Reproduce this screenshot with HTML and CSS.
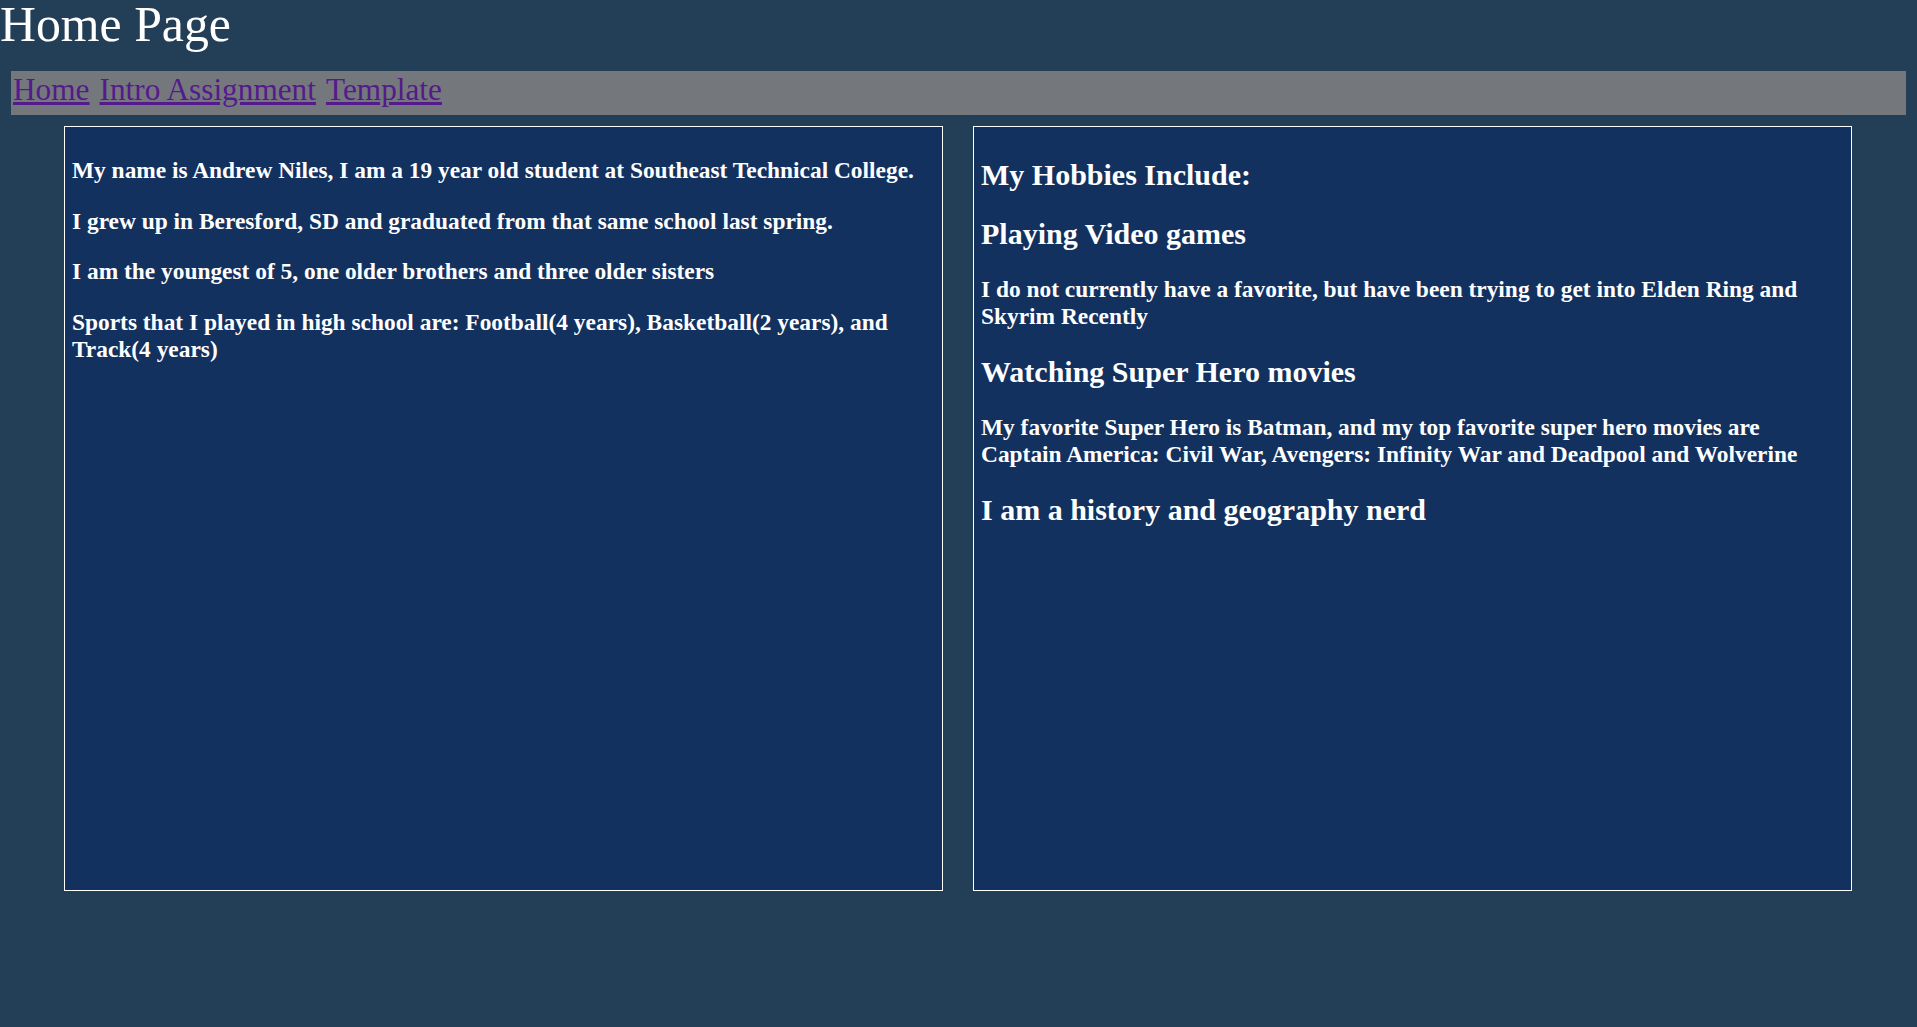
FILE: index.html
```html
<!DOCTYPE html>
<html lang="en">
<head>
<meta charset="utf-8">
<title>Home Page</title>
<link rel="stylesheet" href="styles.css">
</head>
<body>
<h1 class="title">Home Page</h1>
<nav class="nav">
  <a class="nav-link" href="#home">Home</a>
  <a class="nav-link" href="#intro">Intro Assignment</a>
  <a class="nav-link" href="#template">Template</a>
</nav>
<main class="columns">
  <section class="box box-left">
    <h3 class="text">My name is Andrew Niles, I am a 19 year old student at Southeast Technical College.</h3>
    <h3 class="text">I grew up in Beresford, SD and graduated from that same school last spring.</h3>
    <h3 class="text">I am the youngest of 5, one older brothers and three older sisters</h3>
    <h3 class="text">Sports that I played in high school are: Football(4 years), Basketball(2 years), and Track(4 years)</h3>
  </section>
  <section class="box box-right">
    <h2 class="heading">My Hobbies Include:</h2>
    <h2 class="heading">Playing Video games</h2>
    <h3 class="text">I do not currently have a favorite, but have been trying to get into Elden Ring and Skyrim Recently</h3>
    <h2 class="heading">Watching Super Hero movies</h2>
    <h3 class="text">My favorite Super Hero is Batman, and my top favorite super hero movies are Captain America: Civil War, Avengers: Infinity War and Deadpool and Wolverine</h3>
    <h2 class="heading">I am a history and geography nerd</h2>
  </section>
</main>
</body>
</html>
```

FILE: styles.css
```css
html, body {
  margin: 0;
  padding: 0;
}

body {
  background: #223f57;
  color: #ffffff;
  font-family: "Liberation Serif", "Times New Roman", serif;
  font-size: 20px;
  min-height: 1027px;
}

.title {
  margin: 0;
  font-size: 49.8px;
  font-weight: normal;
  line-height: 1;
  height: 50px;
}

.nav {
  display: flex;
  gap: 10px;
  margin: 21px 11px 0 11px;
  height: 44px;
  padding-left: 2px;
  background: #74787c;
  box-sizing: border-box;
}

.nav-link {
  color: #551a8b;
  font-size: 31.3px;
  line-height: 38px;
  text-decoration: underline;
}

.columns {
  display: flex;
  gap: 30px;
  padding: 11px 65px 0 64px;
}

.box {
  flex: 0 0 879px;
  height: 765px;
  box-sizing: border-box;
  border: 1px solid #ffffff;
  background: #12315f;
  padding: 7px 7px;
}

.text {
  font-size: 23.4px;
  font-weight: bold;
  margin: 23.4px 0;
}

.heading {
  font-size: 30px;
  font-weight: bold;
  margin: 25px 0;
}

.box-right {
  padding-top: 6px;
}
```
